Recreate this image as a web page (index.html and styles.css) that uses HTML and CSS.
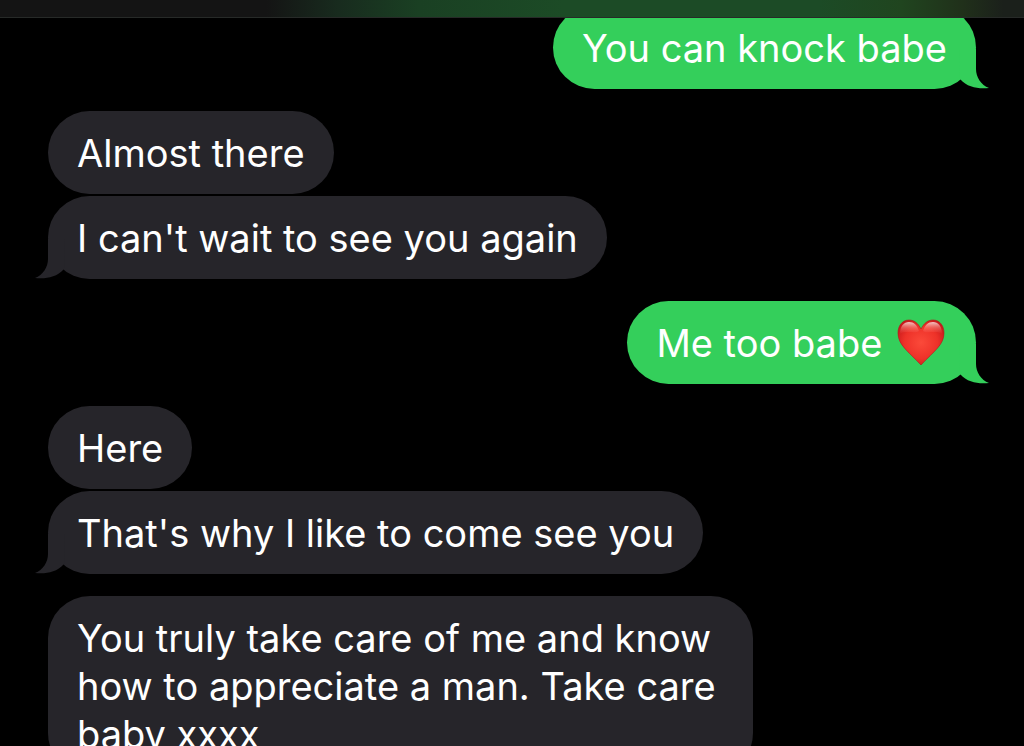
FILE: index.html
```html
<!DOCTYPE html>
<html lang="en">
<head>
<meta charset="UTF-8">
<meta name="viewport" content="width=device-width, initial-scale=1.0">
<title>Messages</title>
<link rel="stylesheet" href="styles.css">
</head>
<body>

<header class="top-bar"></header>

<main class="thread">
  <div class="group sent">
    <p class="bubble">You can knock babe
      <svg class="tail" viewBox="0 0 30 40" aria-hidden="true"><path d="M0 0H17V20C17 28 22 36 30 39C20 40 9 39 1 30Z"/></svg>
    </p>
  </div>

  <div class="group received">
    <p class="bubble">Almost there</p>
    <p class="bubble">I can't wait to see you again
      <svg class="tail" viewBox="0 0 30 40" aria-hidden="true"><path d="M0 0H17V20C17 28 22 36 30 39C20 40 9 39 1 30Z"/></svg>
    </p>
  </div>

  <div class="group sent">
    <p class="bubble">Me too babe
      <svg class="emoji" viewBox="-3 0 54 48" role="img" aria-label="red heart">
        <defs>
          <radialGradient id="heartFill" cx="50%" cy="50%" r="60%">
            <stop offset="0" stop-color="#fb4a3a"/>
            <stop offset="0.6" stop-color="#ee3229"/>
            <stop offset="1" stop-color="#c4171a"/>
          </radialGradient>
          <linearGradient id="heartShine" x1="0" y1="0" x2="0" y2="1">
            <stop offset="0" stop-color="#fff" stop-opacity="0.75"/>
            <stop offset="0.5" stop-color="#ffb0a8" stop-opacity="0.35"/>
            <stop offset="1" stop-color="#ff8a80" stop-opacity="0"/>
          </linearGradient>
        </defs>
        <path d="M25 10C22 4 18 1 13 1C6 1 2 7 2 14C2 26 12 32 25 46C38 32 48 26 48 14C48 7 44 1 37 1C32 1 28 4 25 10Z" fill="url(#heartFill)"/>
        <path d="M25 10C22 4 18 1 13 1C6 1 2 7 2 14C2 26 12 32 25 46C38 32 48 26 48 14C48 7 44 1 37 1C32 1 28 4 25 10Z" fill="none" stroke="#b5141a" stroke-opacity="0.6"/>
        <path d="M4 15C4 7 8 3 13 3C18 3 21 6 23 12C20 15 9 11 4 15Z" fill="url(#heartShine)"/>
        <path d="M46 15C46 7 42 3 37 3C32 3 29 6 27 12C30 15 41 11 46 15Z" fill="url(#heartShine)"/>
      </svg>
      <svg class="tail" viewBox="0 0 30 40" aria-hidden="true"><path d="M0 0H17V20C17 28 22 36 30 39C20 40 9 39 1 30Z"/></svg>
    </p>
  </div>

  <div class="group received">
    <p class="bubble">Here</p>
    <p class="bubble">That's why I like to come see you
      <svg class="tail" viewBox="0 0 30 40" aria-hidden="true"><path d="M0 0H17V20C17 28 22 36 30 39C20 40 9 39 1 30Z"/></svg>
    </p>
  </div>

  <div class="group received">
    <p class="bubble">You truly take care of me and know how to appreciate a man. Take care baby xxxx</p>
  </div>
</main>

</body>
</html>
```
FILE: styles.css
```css
* {
  box-sizing: border-box;
}

body {
  margin: 0;
  height: 100vh;
  overflow: hidden;
  background: #000;
  color: #fff;
  font-family: Inter, "Liberation Sans", sans-serif;
  font-size: 38px;
  line-height: 48px;
}

/* Bottom edge of the nav bar, tinted by the bubbles under it */
.top-bar {
  position: sticky;
  top: 0;
  z-index: 1;
  height: 18px;
  border-bottom: 1px solid #272a28;
  background: linear-gradient(to right, #141414 0%, #141414 26%, #182b1e 33%, #1a4023 41%, #1c4b26 55%, #1c4b26 80%, #20451f 88%, #20301a 94%, #1b201b 98%);
}

.thread {
  display: flex;
  flex-direction: column;
  gap: 22px;
  margin-top: -12px;
  padding: 0 48px;
}

.group {
  display: flex;
  flex-direction: column;
  gap: 2px;
}

.sent {
  --bubble: #34cf5b;
  align-items: flex-end;
}

.received {
  --bubble: #26252a;
  align-items: flex-start;
}

.bubble {
  position: relative;
  max-width: 76%;
  margin: 0;
  padding: 18px 29px 17px;
  border-radius: 42px;
  background: var(--bubble);
}

/* Tail hangs off the bottom corner of the last bubble in a group */
.tail {
  position: absolute;
  right: -13px;
  bottom: 0;
  width: 30px;
  height: 40px;
  fill: var(--bubble);
}

.received .tail {
  right: auto;
  left: -13px;
  transform: scaleX(-1);
}

.emoji {
  width: 54px;
  height: 48px;
  vertical-align: top;
}
```
